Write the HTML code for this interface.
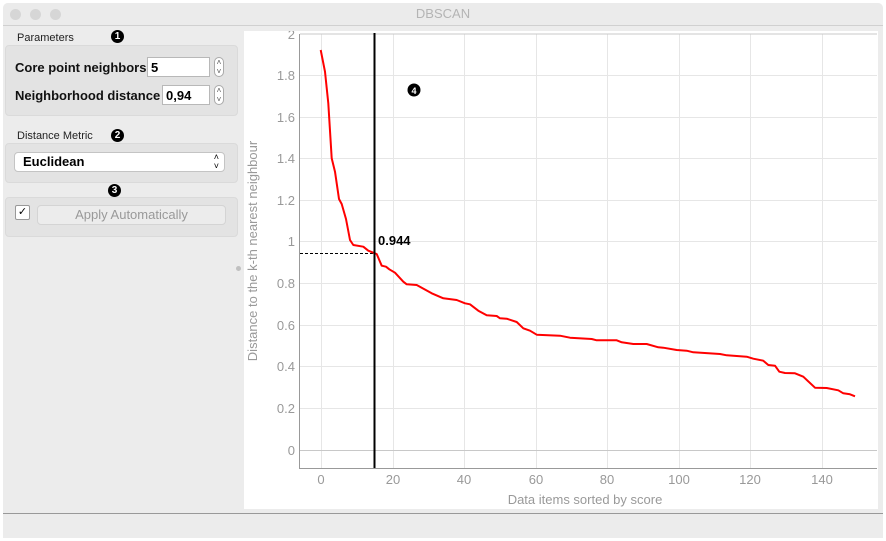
<!DOCTYPE html>
<html><head><meta charset="utf-8"><style>
body{margin:0;width:886px;height:541px;background:#fff;font-family:"Liberation Sans",sans-serif;overflow:hidden;position:relative}
.win{position:absolute;left:3px;top:3px;width:880px;height:535px;background:#ececec;border-radius:5px;overflow:hidden}
.title{position:absolute;left:0;top:0;width:880px;height:22px;background:#ebebeb;border-bottom:1px solid #d0d0d0;text-align:center;font-size:13px;line-height:22px;color:#b4b4b4}
.dot{position:absolute;top:6px;width:11px;height:11px;border-radius:50%;background:#d6d6d6}
.box{position:absolute;background:#e3e3e3;border:1px solid #dadada;border-radius:4px}
.lbl{position:absolute;font-size:11px;color:#222}
.b{position:absolute;font-size:13px;font-weight:bold;color:#111}
.inp{position:absolute;background:#fff;border:1px solid #b8b8b8;height:20px;font-size:13px;font-weight:bold;line-height:20px;padding-left:3px;box-sizing:border-box}
.spin{position:absolute;width:10px;height:20px;border:1px solid #aaa;border-radius:5px;background:#fff;font-size:8px;line-height:9px;text-align:center;color:#555;box-sizing:border-box}
.num{position:absolute;width:13px;height:13px;border-radius:50%;background:#000;color:#fff;font-size:10px;font-weight:bold;text-align:center;line-height:13px;z-index:2}
</style></head><body>
<div class="win">
<div class="title">DBSCAN</div>
<div class="dot" style="left:7px"></div><div class="dot" style="left:27px"></div><div class="dot" style="left:47px"></div>
</div>
<div class="lbl" style="left:17px;top:32px">Parameters</div>
<div class="num" style="left:111px;top:30px">1</div>
<div class="box" style="left:5px;top:45px;width:231px;height:69px"></div>
<div class="b" style="left:15px;top:60px">Core point neighbors</div>
<div class="inp" style="left:147px;top:57px;width:63px">5</div>
<div class="spin" style="left:214px;top:57px">˄<br>˅</div>
<div class="b" style="left:15px;top:88px">Neighborhood distance</div>
<div class="inp" style="left:162px;top:85px;width:48px">0,94</div>
<div class="spin" style="left:214px;top:85px">˄<br>˅</div>
<div class="lbl" style="left:17px;top:130px">Distance Metric</div>
<div class="num" style="left:111px;top:129px">2</div>
<div class="box" style="left:5px;top:143px;width:231px;height:38px"></div>
<div style="position:absolute;left:14px;top:152px;width:211px;height:20px;background:#fff;border:1px solid #c4c4c4;border-radius:4px;box-sizing:border-box;font-size:13px;font-weight:bold;line-height:18px;padding-left:8px">Euclidean<span style="position:absolute;right:5px;top:0;font-size:9px;line-height:9px;font-weight:normal">˄<br>˅</span></div>
<div class="num" style="left:108px;top:184px">3</div>
<div class="box" style="left:5px;top:197px;width:231px;height:38px"></div>
<div style="position:absolute;left:15px;top:205px;width:13px;height:13px;background:#fff;border:1px solid #999;border-radius:2px;font-size:11px;line-height:13px;text-align:center">✓</div>
<div style="position:absolute;left:37px;top:205px;width:189px;height:20px;background:#ececec;border:1px solid #d4d4d4;border-radius:4px;box-sizing:border-box;font-size:13px;color:#999;text-align:center;line-height:18px">Apply Automatically</div>
<div style="position:absolute;left:236px;top:266px;width:5px;height:5px;border-radius:50%;background:#c0c0c0"></div>
<div style="position:absolute;left:3px;top:513px;width:880px;height:24px;background:#ececec;border-top:1px solid #999"></div>
<svg style="position:absolute;left:244px;top:31px" width="634" height="478" viewBox="244 31 634 478">
<rect x="244" y="31" width="634" height="478" fill="#fff"/>
<g stroke="#e6e6e6" stroke-width="1">
<line x1="321.5" y1="34" x2="321.5" y2="468"/><line x1="393.5" y1="34" x2="393.5" y2="468"/><line x1="464.5" y1="34" x2="464.5" y2="468"/><line x1="536.5" y1="34" x2="536.5" y2="468"/><line x1="607.5" y1="34" x2="607.5" y2="468"/><line x1="679.5" y1="34" x2="679.5" y2="468"/><line x1="750.5" y1="34" x2="750.5" y2="468"/><line x1="822.5" y1="34" x2="822.5" y2="468"/>
<line x1="300" y1="75.5" x2="877" y2="75.5"/><line x1="300" y1="117.5" x2="877" y2="117.5"/><line x1="300" y1="158.5" x2="877" y2="158.5"/><line x1="300" y1="200.5" x2="877" y2="200.5"/><line x1="300" y1="241.5" x2="877" y2="241.5"/><line x1="300" y1="283.5" x2="877" y2="283.5"/><line x1="300" y1="325.5" x2="877" y2="325.5"/><line x1="300" y1="366.5" x2="877" y2="366.5"/><line x1="300" y1="408.5" x2="877" y2="408.5"/>
</g>
<line x1="300" y1="34" x2="877" y2="34" stroke="#c8c8c8"/>
<line x1="300" y1="450.5" x2="877" y2="450.5" stroke="#c8c8c8"/>
<line x1="299.5" y1="34" x2="299.5" y2="468" stroke="#999"/>
<line x1="299" y1="468.5" x2="877" y2="468.5" stroke="#999"/>
<g font-size="13" fill="#999" text-anchor="end" font-family="Liberation Sans">
<text x="295" y="39">2</text><text x="295" y="80">1.8</text><text x="295" y="122">1.6</text><text x="295" y="163">1.4</text><text x="295" y="205">1.2</text><text x="295" y="246">1</text><text x="295" y="288">0.8</text><text x="295" y="330">0.6</text><text x="295" y="371">0.4</text><text x="295" y="413">0.2</text><text x="295" y="455">0</text>
</g>
<g font-size="13" fill="#999" text-anchor="middle" font-family="Liberation Sans">
<text x="321" y="484">0</text><text x="393" y="484">20</text><text x="464" y="484">40</text><text x="536" y="484">60</text><text x="607" y="484">80</text><text x="679" y="484">100</text><text x="750" y="484">120</text><text x="822" y="484">140</text>
<text x="585" y="504">Data items sorted by score</text>
<text transform="translate(257,251) rotate(-90)">Distance to the k-th nearest neighbour</text>
</g>
<line x1="300" y1="253.5" x2="374" y2="253.5" stroke="#000" stroke-dasharray="3,2"/>
<polyline fill="none" stroke="#f00" stroke-width="2" stroke-linejoin="round" points="320.7,50 325,71.7 328.3,103.3 331.7,158.3 335,171.7 339,199 341.7,204 346,219 350,240 353.3,245 363.3,246.7 368.3,250.7 373.3,252.7 376.7,254 381.7,265.7 386,266.7 389.3,269.3 395,272.7 403.3,281.7 406.7,284.3 416.7,285 431.7,293.3 443.3,298.3 456.7,300 465,303.3 470,304.3 478.3,310.7 486.7,315.3 496.7,316 500,318.3 506.7,318.7 516.7,322 523.3,328.3 530,330.7 536.7,334.7 560,335.7 570,337.7 591.7,339 596.7,340.3 616.7,340.3 621.7,342.3 633.3,344 646.7,344 658.3,347.3 663.3,347.7 676.7,350 686.7,350.7 693.3,352.3 720,354 726.7,355.3 746.7,356.7 753.3,358.7 763.3,360.7 768.3,365 775,365.7 779.3,371.7 785,373 795,373.3 803.3,376.7 815,387.7 826.7,388 838.3,390.3 843.3,393.3 850,394.3 855,396.3"/>
<line x1="374.5" y1="33" x2="374.5" y2="468" stroke="#000" stroke-width="2"/>
<text x="378" y="245" font-size="13" font-weight="bold" fill="#000" font-family="Liberation Sans">0.944</text>
<circle cx="414" cy="90" r="6.5" fill="#000"/><text x="414" y="94" font-size="9" font-weight="bold" fill="#fff" text-anchor="middle" font-family="Liberation Sans">4</text>
</svg>
</body></html>
